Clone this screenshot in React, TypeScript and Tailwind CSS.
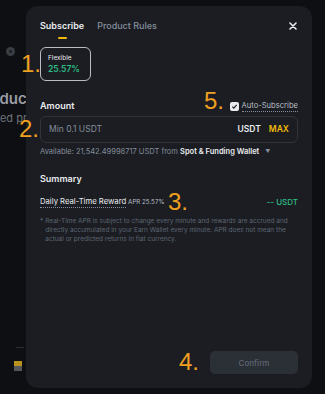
import React from "react";

const Num = ({ children, className }: { children: React.ReactNode; className: string }) => (
  <span
    className={`absolute text-[24px] leading-none text-[#f0a020] ${className}`}
    style={{ fontFamily: '"Liberation Sans", Arial, sans-serif' }}
  >
    {children}
  </span>
);

export default function App() {
  return (
    <div
      className="relative w-[325px] h-[394px] overflow-hidden bg-[#0d0f13]"
      style={{ fontFamily: 'Inter, "Noto Sans", sans-serif' }}
    >
      {/* dimmed page behind */}
      <div className="flex flex-col pt-[47px] text-[#8b8e94]">
        <div className="ml-[6px] flex h-[9px] w-[9px] items-center justify-center rounded-full bg-[#3a3d43] text-[6px] font-bold text-[#0d0f13]">
          ×
        </div>
        <div className="ml-[-25px] mt-[34px] whitespace-nowrap text-[15px] font-semibold leading-[18px] text-[#9a9da3]">Products</div>
        <div className="ml-[-15px] mt-[4px] whitespace-nowrap text-[11px] leading-[13px] text-[#6f7278]">Fixed products</div>
        <div className="ml-[16px] mt-[222px] h-px w-[8px] bg-[#2a2d33]" />
        <div className="ml-[14px] mt-[13px] h-[5px] w-[8px] bg-[#b8921c]" />
        <div className="ml-[14px] h-[5px] w-[8px] bg-[#55575c]" />
      </div>

      {/* modal */}
      <div className="absolute left-[26px] top-[6px] flex h-[382px] w-[286px] flex-col rounded-[12px] bg-[#1b1d22] px-[14px] pb-[14px] pt-[13px] text-[#eaecef]">
        <div className="flex items-start justify-between">
          <div className="flex gap-[13px]">
            <div className="flex flex-col items-center">
              <span className="text-[9px] font-semibold leading-[14px] text-[#eaecef]">Subscribe</span>
              <span className="mt-[4px] h-[2px] w-[9px] rounded bg-[#f0b90b]" />
            </div>
            <span className="text-[9px] font-medium leading-[14px] text-[#848e9c]">Product Rules</span>
          </div>
          <svg width="8" height="8" viewBox="0 0 8 8" className="mr-[1px] mt-[3px]">
            <path d="M1 1L7 7M7 1L1 7" stroke="#eaecef" strokeWidth="1.6" strokeLinecap="round" />
          </svg>
        </div>

        <div className="mt-[8px] flex h-[34px] w-[51px] flex-col justify-center rounded-[6px] border border-[#b7bdc6] pl-[7px]">
          <span className="text-[6.5px] leading-[9px] text-[#eaecef]">Flexible</span>
          <span className="text-[8.5px] font-semibold leading-[12px] text-[#2ebd85]">25.57%</span>
        </div>

        <div className="mt-[19px] flex items-center justify-between">
          <span className="text-[9px] font-semibold leading-[12px]">Amount</span>
          <div className="flex items-center gap-[3px]">
            <span className="flex h-[9px] w-[9px] items-center justify-center rounded-[2px] bg-[#eaecef]">
              <svg width="7" height="7" viewBox="0 0 8 8">
                <path d="M1.5 4.2L3.2 5.8L6.5 2.2" stroke="#1b1d22" strokeWidth="1.3" fill="none" />
              </svg>
            </span>
            <span className="border-b border-dotted border-[#848e9c] text-[7.6px] leading-[11px] text-[#b7bdc6]">Auto-Subscribe</span>
          </div>
        </div>

        <div className="mt-[4px] flex h-[27px] shrink-0 items-center justify-between rounded-[6px] border border-[#2f333b] px-[8px]">
          <span className="text-[8.5px] text-[#848e9c]">Min 0.1 USDT</span>
          <div className="flex gap-[8px] text-[8.5px] font-semibold">
            <span className="text-[#eaecef]">USDT</span>
            <span className="text-[#f0b90b]">MAX</span>
          </div>
        </div>

        <div className="mt-[3px] flex items-center text-[7.5px] leading-[11px] text-[#848e9c]">
          <span>Available: 21,542.49998717 USDT from&nbsp;</span>
          <span className="font-semibold text-[#eaecef]">Spot &amp; Funding Wallet</span>
          <span className="ml-[6px] text-[5px]">▼</span>
        </div>

        <span className="mt-[16px] text-[9px] font-semibold leading-[12px]">Summary</span>

        <div className="mt-[11px] flex items-center justify-between">
          <div className="flex items-center gap-[2px]">
            <span className="border-b border-dotted border-[#848e9c] text-[7.7px] leading-[11px] text-[#eaecef]">Daily Real-Time Reward</span>
            <span className="text-[6.2px] text-[#b7bdc6]">APR 25.57%</span>
          </div>
          <span className="text-[8px] font-medium text-[#2ebd85]">-- USDT</span>
        </div>

        <div className="mt-[9px] flex gap-[2px] text-[6.5px] leading-[9px] text-[#5e6673]">
          <span>*</span>
          <span>
            Real-Time APR is subject to change every minute and rewards are accrued and directly accumulated in your Earn Wallet every minute. APR does not mean the actual or predicted returns in fiat currency.
          </span>
        </div>

        <div className="mt-auto flex justify-end">
          <div className="flex h-[23px] w-[88px] items-center justify-center rounded-[5px] bg-[#2b2f36] text-[8px] font-medium text-[#5e6673]">
            Confirm
          </div>
        </div>
      </div>

      {/* annotations */}
      <Num className="left-[21px] top-[52px]">1.</Num>
      <Num className="left-[19px] top-[117px]">2.</Num>
      <Num className="left-[168px] top-[190px]">3.</Num>
      <Num className="left-[179px] top-[350px]">4.</Num>
      <Num className="left-[204px] top-[89px]">5.</Num>
    </div>
  );
}
